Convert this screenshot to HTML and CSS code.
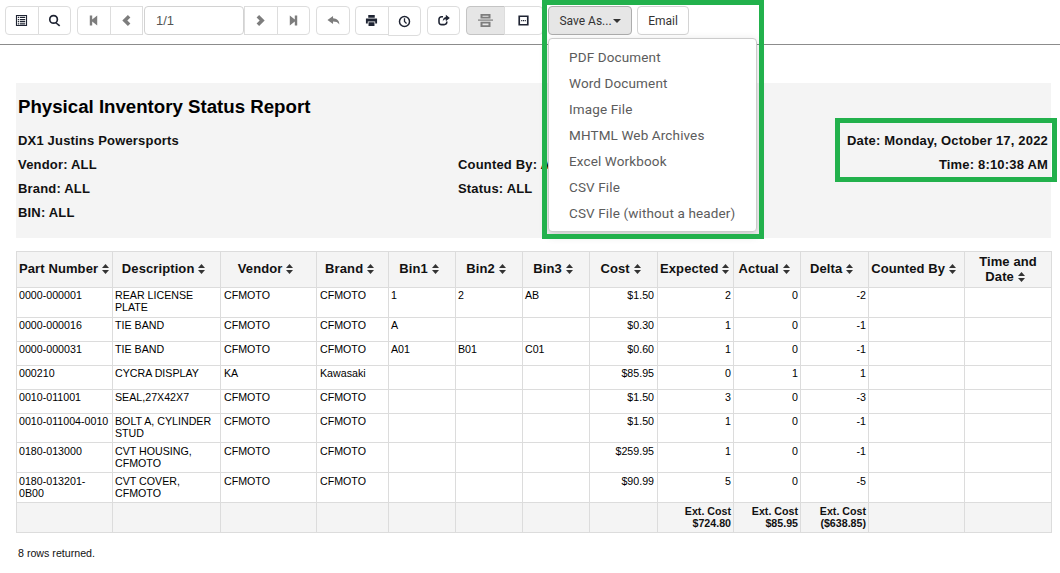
FILE: index.html
```html
<!DOCTYPE html>
<html lang="en">
<head>
<meta charset="utf-8">
<title>Physical Inventory Status Report</title>
<link rel="stylesheet" href="styles.css">
</head>
<body>
<svg class="defs" width="0" height="0" aria-hidden="true">
  <symbol id="sort" viewBox="0 0 7 10"><path d="M3.500 0 7 4H0zM3.500 10 0 6H7z"/></symbol>
</svg>
<header class="toolbar">
  <div class="group">
    <button class="btn dark"><svg viewBox="0 0 14 14"><path fill-rule="evenodd" d="M1 1h12v12H1zM2.200 2.200v9.600h9.600V2.200zM3 3h1.400v1.400H3zM5.200 3H11v1.400H5.200zM3 5.300h1.400v1.400H3zM5.200 5.300H11v1.400H5.200zM3 7.600h1.400V9H3zM5.200 7.600H11V9H5.200zM3 9.900h1.400v1.300H3zM5.200 9.900H11v1.300H5.200z"/></svg></button>
    <button class="btn dark"><svg viewBox="0 0 14 14"><path fill-rule="evenodd" d="M6 .8a5 5 0 1 1 0 10 5 5 0 0 1 0-10zM6 2.600a3.200 3.200 0 1 0 0 6.400 3.200 3.200 0 0 0 0-6.400z"/><path d="M9 8.800 13.200 12 12 13.400 8 10z"/></svg></button>
  </div>
  <div class="group">
    <button class="btn muted"><svg viewBox="0 0 14 14"><path d="M3 1.500h2.600v4.300L11 1.500v11L5.600 8.200v4.300H3z"/></svg></button>
    <button class="btn muted"><svg viewBox="0 0 14 14"><path d="M8.500 1 11.200 3.700 7.900 7 11.200 10.300 8.500 13 2.500 7z"/></svg></button>
    <input class="pager" type="text" value="1/1" aria-label="Page">
    <button class="btn muted"><svg viewBox="0 0 14 14"><path d="M5.500 1 2.800 3.700 6.100 7 2.800 10.300 5.500 13 11.500 7z"/></svg></button>
    <button class="btn muted"><svg viewBox="0 0 14 14"><path d="M11 1.500H8.400v4.300L3 1.500v11l5.400-4.300v4.300H11z"/></svg></button>
  </div>
  <div class="group tuck">
    <button class="btn muted back"><svg viewBox="0 0 14 14"><path d="M6.500 2.200 .5 6.500l6 4.300V8.200c3 0 5 .7 6.800 3 0-4-2.800-6.300-6.800-6.500z"/></svg></button>
  </div>
  <div class="group">
    <button class="btn dark"><svg viewBox="0 0 14 14"><path d="M3.500 1h7v3h-7zM1 4.800h12v5.400h-2V8H3v2.200H1zM3.800 8.800h6.400V13H3.800z"/></svg></button>
    <button class="btn dark tall"><svg viewBox="0 0 14 14"><path fill-rule="evenodd" d="M7 .8a6.200 6.200 0 1 1 0 12.400A6.200 6.200 0 0 1 7 .8zM7 2.400a4.600 4.600 0 1 0 0 9.200 4.600 4.600 0 0 0 0-9.200z"/><path d="M6.300 3.400h1.400v3.300l2 2-1 1-2.400-2.500z"/></svg></button>
  </div>
  <div class="group">
    <button class="btn dark slim"><svg viewBox="0 0 14 14"><path d="M9.500 .8 13.800 4.300 9.500 7.800V5.700C8 5.700 7 6.500 6.200 8c0-3 1.300-4.600 3.300-4.900z"/><path d="M5 2.200h1.500v1.700H5C3.800 3.900 3 4.700 3 6v2.500C3 9.800 3.800 10.600 5 10.600h2.700c1.200 0 2-.8 2-2V8h1.700v.7c0 2.200-1.500 3.600-3.700 3.600H5C2.800 12.300 1.300 10.800 1.300 8.600V5.900C1.300 3.700 2.800 2.200 5 2.200z"/></svg></button>
  </div>
  <div class="group">
    <button class="btn muted active"><svg class="split" viewBox="0 0 15 13"><path fill-rule="evenodd" d="M2.500 0h10v4.500h-10zM4.500 1.700v1.100h6V1.700zM2.500 7.800h10V13h-10zM4.500 9.600v1.700h6V9.600z"/><path d="M0 5.500h15v1.200H0z"/></svg></button>
    <button class="btn dark wide"><svg viewBox="0 0 14 14"><path fill-rule="evenodd" d="M1.500 1.500h11v11h-11zM3.300 3.300v7.400h7.400V3.300zM4.500 6.500h1.200v1.200H4.500zM6.400 6.500h1.200v1.200H6.400zM8.300 6.500h1.200v1.200H8.300z"/></svg></button>
  </div>
  <div class="actions">
    <button class="text-btn open">Save As...<span class="caret"></span></button>
    <button class="text-btn email">Email</button>
  </div>
</header>

<nav class="menu">
  <a>PDF Document</a>
  <a>Word Document</a>
  <a>Image File</a>
  <a>MHTML Web Archives</a>
  <a>Excel Workbook</a>
  <a>CSV File</a>
  <a>CSV File (without a header)</a>
</nav>
<div class="mark mark-menu"></div>
<div class="mark mark-date"></div>

<main class="report">
  <section class="summary">
    <h1>Physical Inventory Status Report</h1>
    <div class="meta">
      <div class="filters">
        <p class="full">DX1 Justins Powersports</p>
        <p>Vendor: ALL</p><p>Counted By: ALL</p>
        <p>Brand: ALL</p><p>Status: ALL</p>
        <p class="full">BIN: ALL</p>
      </div>
      <div class="stamp">
        <p>Date: Monday, October 17, 2022</p>
        <p>Time: 8:10:38 AM</p>
      </div>
    </div>
  </section>

  <table class="grid">
    <colgroup>
      <col class="c96"><col class="c108"><col class="c96"><col class="c72"><col class="c67"><col class="c67"><col class="c67"><col class="c68"><col class="c76"><col class="c67"><col class="c68"><col class="c96"><col class="c87">
    </colgroup>
    <thead>
      <tr>
        <th>Part Number <svg class="sort"><use href="#sort"/></svg></th>
        <th>Description <svg class="sort"><use href="#sort"/></svg></th>
        <th>Vendor <svg class="sort"><use href="#sort"/></svg></th>
        <th>Brand <svg class="sort"><use href="#sort"/></svg></th>
        <th>Bin1 <svg class="sort"><use href="#sort"/></svg></th>
        <th>Bin2 <svg class="sort"><use href="#sort"/></svg></th>
        <th>Bin3 <svg class="sort"><use href="#sort"/></svg></th>
        <th>Cost <svg class="sort"><use href="#sort"/></svg></th>
        <th>Expected <svg class="sort"><use href="#sort"/></svg></th>
        <th>Actual <svg class="sort"><use href="#sort"/></svg></th>
        <th>Delta <svg class="sort"><use href="#sort"/></svg></th>
        <th>Counted By <svg class="sort"><use href="#sort"/></svg></th>
        <th class="wrap">Time and Date <svg class="sort"><use href="#sort"/></svg></th>
      </tr>
    </thead>
    <tbody>
      <tr class="two"><td>0000-000001</td><td>REAR LICENSE PLATE</td><td>CFMOTO</td><td>CFMOTO</td><td>1</td><td>2</td><td>AB</td><td class="num">$1.50</td><td class="num">2</td><td class="num">0</td><td class="num">-2</td><td></td><td></td></tr>
      <tr><td>0000-000016</td><td>TIE BAND</td><td>CFMOTO</td><td>CFMOTO</td><td>A</td><td></td><td></td><td class="num">$0.30</td><td class="num">1</td><td class="num">0</td><td class="num">-1</td><td></td><td></td></tr>
      <tr><td>0000-000031</td><td>TIE BAND</td><td>CFMOTO</td><td>CFMOTO</td><td>A01</td><td>B01</td><td>C01</td><td class="num">$0.60</td><td class="num">1</td><td class="num">0</td><td class="num">-1</td><td></td><td></td></tr>
      <tr><td>000210</td><td>CYCRA DISPLAY</td><td>KA</td><td>Kawasaki</td><td></td><td></td><td></td><td class="num">$85.95</td><td class="num">0</td><td class="num">1</td><td class="num">1</td><td></td><td></td></tr>
      <tr><td>0010-011001</td><td>SEAL,27X42X7</td><td>CFMOTO</td><td>CFMOTO</td><td></td><td></td><td></td><td class="num">$1.50</td><td class="num">3</td><td class="num">0</td><td class="num">-3</td><td></td><td></td></tr>
      <tr><td>0010-011004-0010</td><td>BOLT A, CYLINDER STUD</td><td>CFMOTO</td><td>CFMOTO</td><td></td><td></td><td></td><td class="num">$1.50</td><td class="num">1</td><td class="num">0</td><td class="num">-1</td><td></td><td></td></tr>
      <tr class="two late"><td>0180-013000</td><td>CVT HOUSING, CFMOTO</td><td>CFMOTO</td><td>CFMOTO</td><td></td><td></td><td></td><td class="num">$259.95</td><td class="num">1</td><td class="num">0</td><td class="num">-1</td><td></td><td></td></tr>
      <tr class="two late"><td>0180-013201-0B00</td><td>CVT COVER, CFMOTO</td><td>CFMOTO</td><td>CFMOTO</td><td></td><td></td><td></td><td class="num">$90.99</td><td class="num">5</td><td class="num">0</td><td class="num">-5</td><td></td><td></td></tr>
    </tbody>
    <tfoot>
      <tr class="two late"><td></td><td></td><td></td><td></td><td></td><td></td><td></td><td></td><td class="num">Ext. Cost<br>$724.80</td><td class="num">Ext. Cost<br>$85.95</td><td class="num">Ext. Cost<br>($638.85)</td><td></td><td></td></tr>
    </tfoot>
  </table>
  <p class="count">8 rows returned.</p>
</main>
</body>
</html>
```
FILE: styles.css
```css
* { box-sizing: border-box; }
html, body { margin: 0; padding: 0; }
body { width: 1060px; height: 573px; overflow: hidden; background: #fff; color: #000; font-family: "Liberation Sans", Arial, sans-serif; position: relative; }
.defs { position: absolute; }
p, h1 { margin: 0; }

.toolbar { display: flex; gap: 6px; height: 45px; padding: 6px 0 0 5px; border-bottom: 1px solid #8c8c8c; align-items: flex-start; }
.group { display: flex; }
.group.tuck { margin-right: -1px; }
.btn { width: 33.500px; height: 29px; padding: 0; border: 1px solid #ddd; background: #fff; display: flex; align-items: center; justify-content: center; margin-left: -1px; }
.group .btn:first-child { margin-left: 0; border-radius: 4px 0 0 4px; }
.group .btn:last-child { border-radius: 0 4px 4px 0; }
.group .btn:only-child { border-radius: 4px; }
.btn svg { width: 13px; height: 13px; display: block; }
.btn.dark svg { fill: #1f2433; }
.btn.muted svg { fill: #7d7d7d; }
.btn.back { width: 34px; }
.btn.slim { width: 33px; }
.btn.tall { height: 30px; }
.btn.wide { width: 39px; }
.btn.active { width: 39px; background: #e6e6e6; border-color: #c4c4c4; }
.btn .split { width: 15px; height: 13px; }
.pager { width: 100px; height: 29px; margin-left: 1px; padding: 0 11px; border: 1px solid #d2d2d2; border-radius: 4px; font: 13px "Liberation Sans", Arial, sans-serif; color: #555; background: #fff; }
.group .pager + .btn { margin-left: 0; }

.actions { display: flex; gap: 5px; margin-left: -1px; }
.text-btn { height: 29px; padding: 0; border: 1px solid #d4d4d4; border-radius: 4px; background: #fff; color: #333; font: 12px Roboto, sans-serif; white-space: nowrap; }
.text-btn.open { width: 84px; background: #e6e6e6; border-color: #adadad; }
.text-btn.email { width: 52px; }
.caret { display: inline-block; width: 0; height: 0; margin-left: 1px; vertical-align: middle; border-top: 4px solid #333; border-left: 4px solid transparent; border-right: 4px solid transparent; }

.menu { position: absolute; z-index: 3; left: 548px; top: 38px; width: 209px; height: 194px; padding: 5px 0; background: #fff; border: 1px solid #ccc; border-radius: 4px; box-shadow: 0 3px 10px rgba(0,0,0,.18); display: flex; flex-direction: column; }
.menu a { display: block; height: 26px; padding-left: 20px; font: 13.500px/26px Roboto, sans-serif; letter-spacing: .13px; color: #5c5c5c; white-space: nowrap; }
.mark { position: absolute; z-index: 4; border: 5px solid #22b14c; pointer-events: none; }
.mark-menu { left: 542px; top: 0; width: 222px; height: 239px; }
.mark-date { left: 835px; top: 118px; width: 222px; height: 64px; }

.report { padding: 38px 9px 0 16px; }
.summary { height: 155px; background: #f4f4f4; padding: 12px 3px 0 2px; }
h1 { font-size: 18.670px; line-height: 24px; font-weight: 700; height: 34px; }
.meta { display: flex; justify-content: space-between; font-size: 13px; font-weight: 700; line-height: 24px; letter-spacing: .18px; color: #111; }
.filters { width: 560px; display: grid; grid-template-columns: 440px 120px; grid-auto-rows: 24px; white-space: nowrap; }
.filters .full { grid-column: 1 / -1; }
.stamp { text-align: right; }

.grid { width: 1035px; margin-top: 13px; border-collapse: collapse; table-layout: fixed; font-size: 10.670px; line-height: 12px; }
.c96 { width: 96px; } .c108 { width: 108px; } .c72 { width: 72px; } .c67 { width: 67px; } .c68 { width: 68px; } .c76 { width: 76px; } .c87 { width: 87px; }
.grid th, .grid td { border: 1px solid #dcdcdc; }
.grid th { height: 36px; padding: 1px 2px 3px; background: #f4f4f4; font-size: 13px; line-height: 15px; font-weight: 700; text-align: center; vertical-align: middle; letter-spacing: .1px; color: #111; white-space: nowrap; }
.grid th.wrap { white-space: normal; }
.grid td { height: 24px; padding: 1px 2px 3px; vertical-align: top; }
.grid td:nth-child(3), .grid td:nth-child(4) { padding-left: 3px; }
.grid td:nth-child(8) { padding-right: 3px; }
.grid .two td { height: 30px; }
.grid .late td { padding-top: 2px; padding-bottom: 2px; }
.grid td.num { text-align: right; }
.grid tfoot td { background: #f4f4f4; font-weight: 700; color: #111; }
.sort { width: 7px; height: 10px; fill: #333; vertical-align: -1px; margin-right: 6px; }
.count { font-size: 10.670px; margin: 14px 0 0 2px; color: #111; }
```
